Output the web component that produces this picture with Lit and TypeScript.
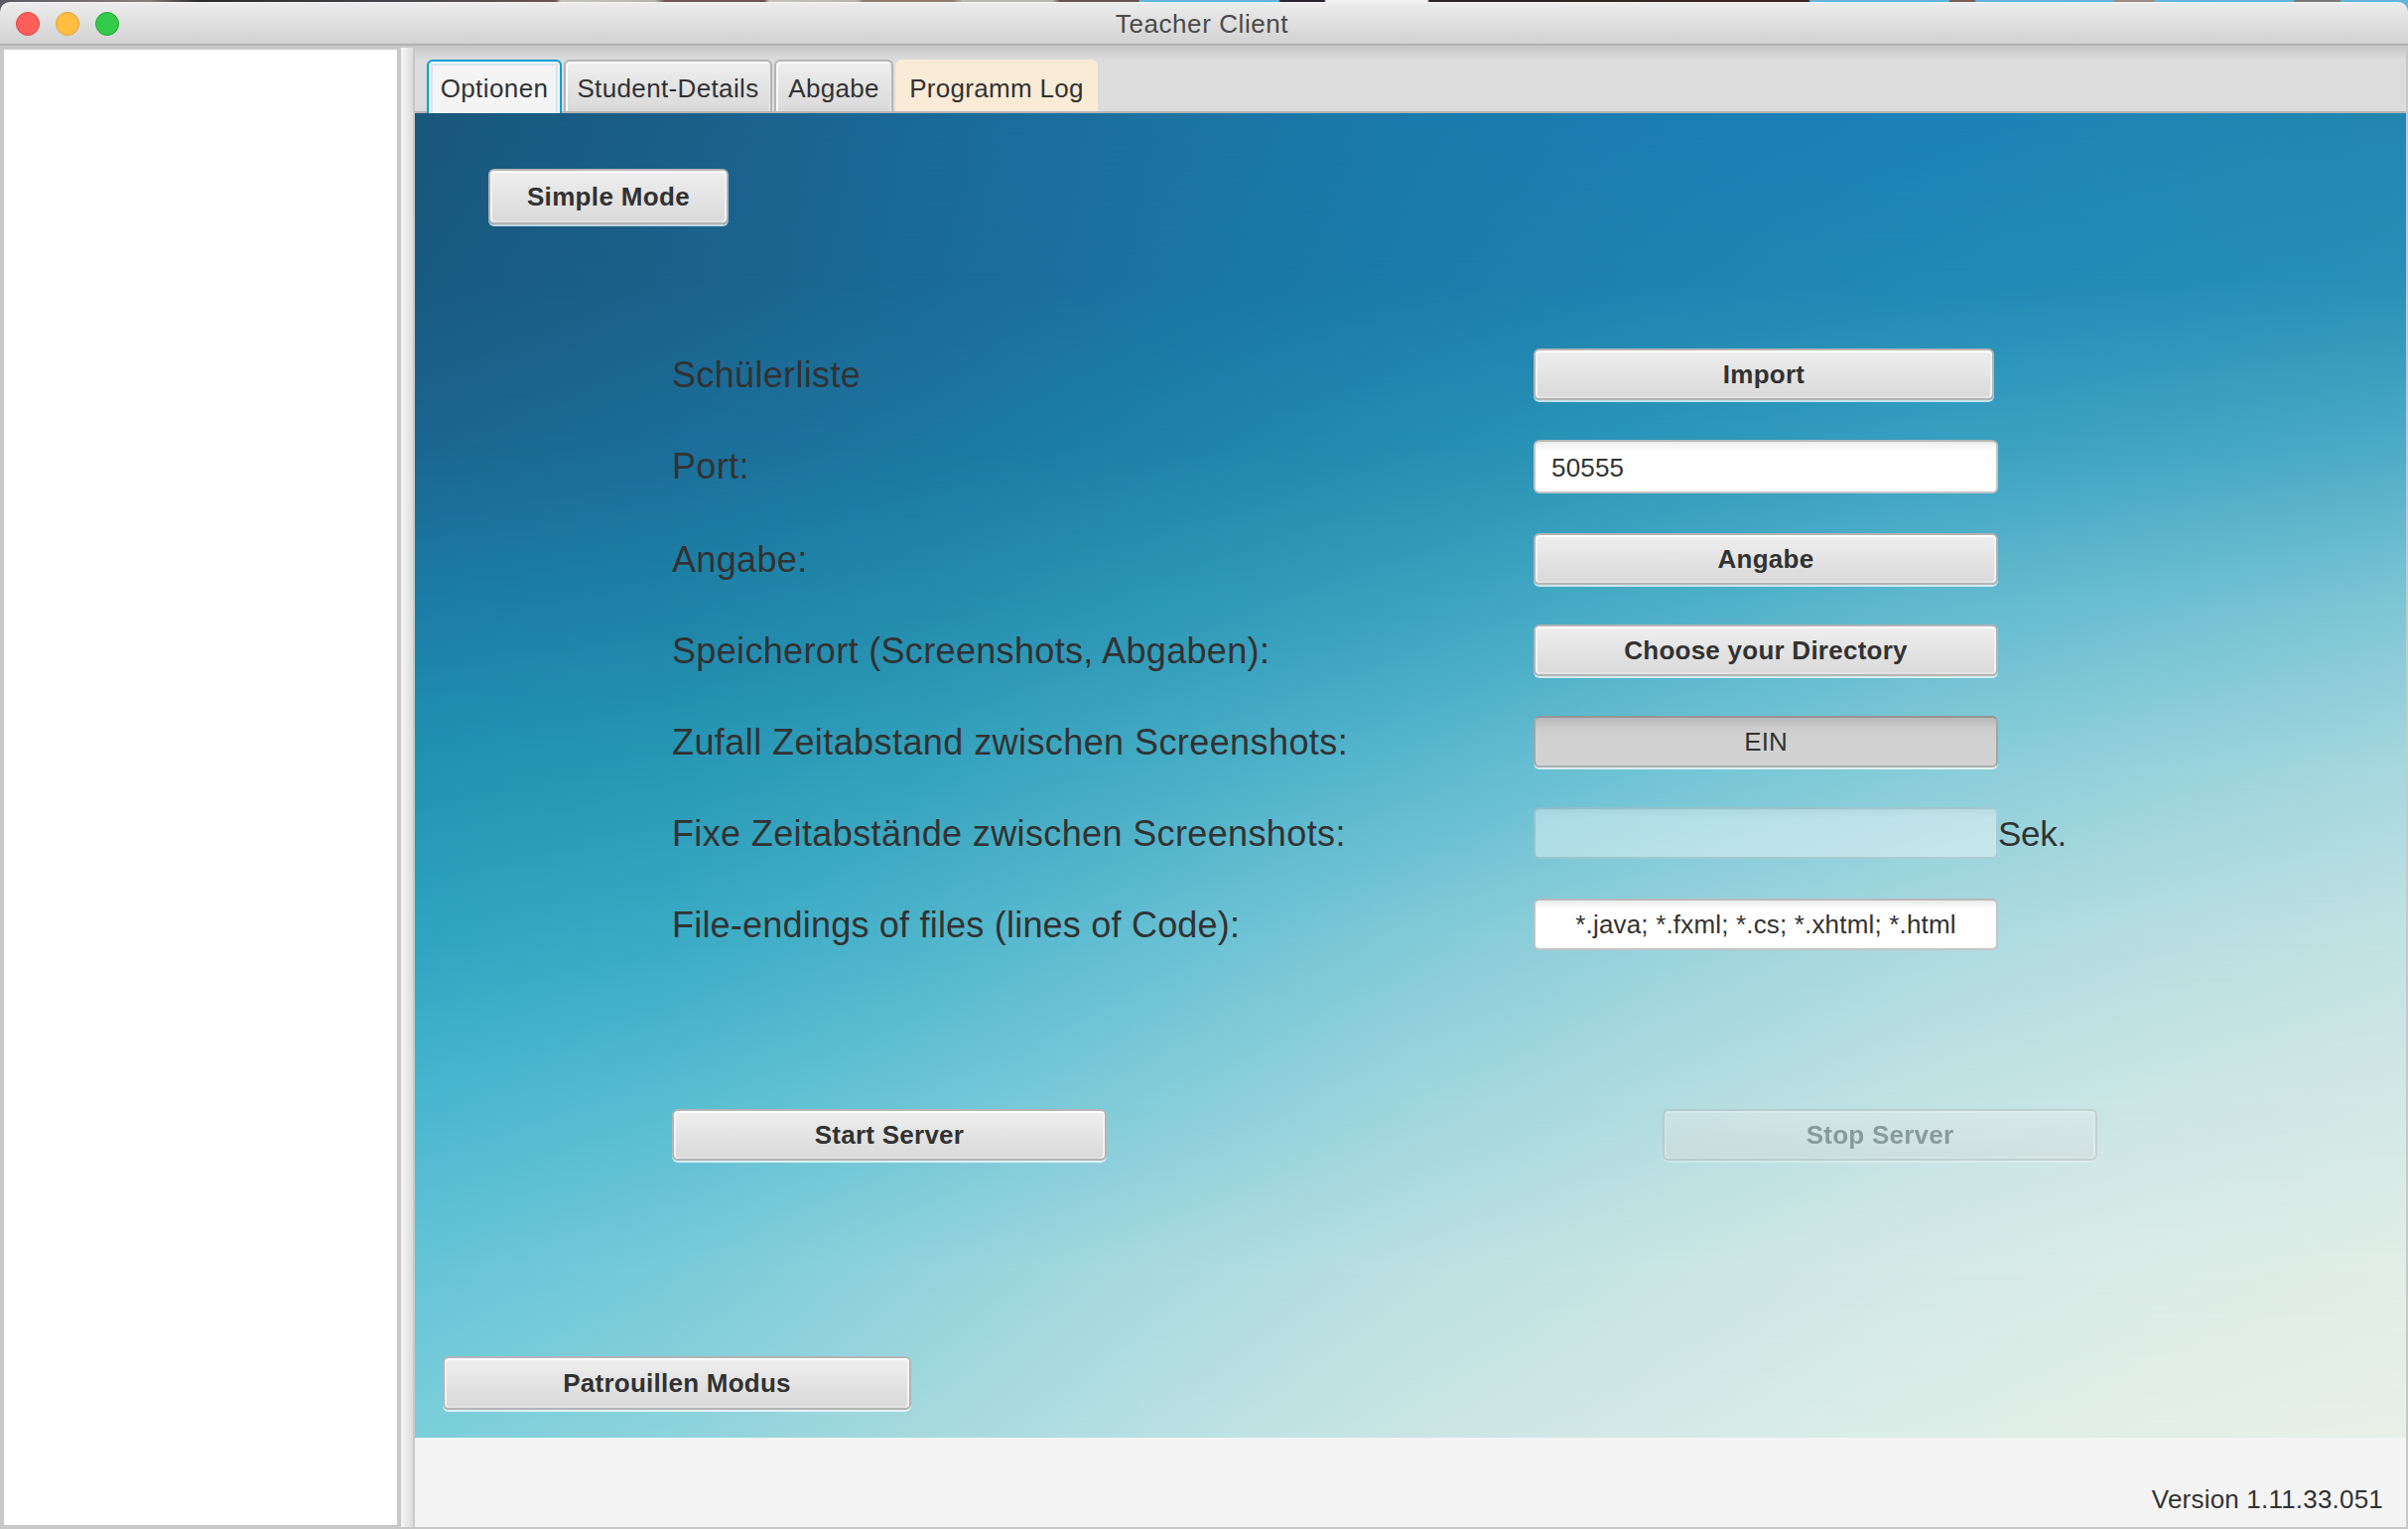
import { LitElement, html, css } from "lit";
import { customElement } from "lit/decorators.js";
import { styleMap } from "lit/directives/style-map.js";

/* Colour grid of the backdrop: one row per evenly spaced height. */
const MESH: string[][] = [
  ["#19577a", "#1a5f88", "#1b6998", "#1b73a2", "#1b7aad", "#1b7eb3", "#1c82b8", "#1f85b4", "#2286b0"],
  ["#1a5a80", "#1a618b", "#1b6a97", "#1b74a2", "#1b7cab", "#1e83b2", "#2088b6", "#238cb7", "#2890b6"],
  ["#1b6691", "#1b6d98", "#1c779f", "#1e82a8", "#248db1", "#2c97ba", "#379fc0", "#41a5c3", "#4dabc6"],
  ["#1c7ea6", "#1e83a8", "#238cae", "#2d98b7", "#3ba3bf", "#4cafc8", "#61b9cf", "#70c0d3", "#80c7d6"],
  ["#2194b3", "#2899b7", "#35a3bd", "#47aec6", "#5cb9cf", "#73c4d6", "#88cdd9", "#99d3dc", "#a8d8df"],
  ["#2fa5c2", "#3aabc5", "#4eb5cc", "#67c0d3", "#82cad8", "#99d3dd", "#abdadf", "#b8dee1", "#c3e2e3"],
  ["#4ab7cf", "#58bdd2", "#6dc5d7", "#86cdda", "#9fd6de", "#b2dce0", "#c2e2e3", "#cce6e5", "#d4e8e5"],
  ["#66c4d8", "#78cad9", "#92d3dc", "#aadadf", "#bce0e2", "#c9e5e4", "#d4e9e6", "#dcece7", "#e1eee7"],
  ["#7acfda", "#8dd3dc", "#a5d9de", "#b9e0e2", "#cae5e4", "#d4e9e6", "#ddede7", "#e3efe8", "#e7f0e8"],
];

@customElement("app-root")
export class AppRoot extends LitElement {
  static styles = css`
    :host {
      display: block;
      width: 2426px;
      height: 1540px;
      overflow: hidden;
      font-family: "Liberation Sans", Arial, sans-serif;
      font-size: 26px;
      color: #323232;
      background: linear-gradient(90deg, #5a5a64 0, #8a7f7c 150px, #2c2a2a 200px, #45464c 400px, #6b5550 560px, #c6c3bd 565px, #b5b3ac 660px, #6c5552 670px, #6c5552 770px, #c6c3bd 775px, #b5b3ac 864px, #8d7b70 870px, #8d7b70 960px, #b9b8b0 970px, #b9b8b0 1060px, #6a5452 1068px, #6a5452 1147px, #62b5dc 1148px, #62b5dc 1288px, #2c2430 1290px, #2c2430 1334px, #f2f2f2 1336px, #f2f2f2 1438px, #2b2326 1440px, #3b2624 1822px, #62b5dc 1824px, #62b5dc 1963px, #7d5b52 1965px, #7d5b52 1989px, #62b5dc 1991px, #62b5dc 2129px, #9a8a84 2131px, #9a8a84 2169px, #62b5dc 2171px, #62b5dc 2310px, #7b7a78 2312px, #7b7a78 2357px, #62b5dc 2359px, #62b5dc 2426px);
    }
    * { box-sizing: border-box; }
    .window {
      display: flex;
      flex-direction: column;
      height: 1540px;
      padding-top: 2px;
    }
    .titlebar {
      display: grid;
      grid-template-columns: 1fr auto 1fr;
      align-items: center;
      height: 44px;
      padding: 0 16px;
      border-radius: 10px 10px 0 0;
      border-top: 1px solid #f6f6f6;
      border-bottom: 2px solid #b1b1b1;
      background: linear-gradient(#ececec, #d2d2d2);
      color: #4a4a4a;
    }
    .lights { display: flex; gap: 16px; }
    .light { width: 24px; height: 24px; border-radius: 50%; border: 1px solid; }
    .red { background: #ff5f5a; border-color: #e0443e; }
    .yellow { background: #ffbe3f; border-color: #dfa032; }
    .green { background: #33c949; border-color: #1fa833; }
    .title { letter-spacing: 0.58px; white-space: nowrap; padding: 1px 4px 0 0; }
    .body {
      display: grid;
      grid-template-columns: 404px 12px 1fr;
      height: 1494px;
      background: #c8c8c8;
      padding: 2px 2px 2px 0;
    }
    .list { margin: 2px 4px 2px 4px; background: #fff; }
    .divider { background: linear-gradient(90deg, #f7f7f7, #ececec 40%, #dcdcdc); }
    .main { display: flex; flex-direction: column; padding-left: 2px; }
    .tabs {
      display: flex;
      height: 66px;
      padding: 12px 0 0 12px;
      gap: 2px;
      background: linear-gradient(#b5b5b5, #b5b5b5) 0 64px / 100% 2px no-repeat,
        linear-gradient(#c9c9c9 0, #dcdcdc 12px);
    }
    .tab {
      height: 52px;
      border: 2px solid #b4b4b4;
      border-bottom: 0;
      border-radius: 6px 6px 0 0;
      background: linear-gradient(#efefef, #d9d9d9);
      box-shadow: inset 2px 2px 0 #fafafa, inset -1px 0 0 #ececec;
      display: flex;
      align-items: center;
      justify-content: center;
      white-space: nowrap;
      padding-top: 4px;
    }
    .t1 {
      width: 136px;
      height: 54px;
      border-color: #039ed3;
      background: #f4f4f4;
      box-shadow: inset 0 2px 0 #f4f4f4, inset 2px 0 0 #f4f4f4, inset -2px 0 0 #f4f4f4,
        inset 0 4px 0 #d3e8ef, inset 4px 0 0 #d3e8ef, inset -4px 0 0 #d3e8ef;
      padding-top: 2px;
      letter-spacing: 0.4px;
    }
    .t2 { width: 210px; letter-spacing: 0.36px; }
    .t3 { width: 120px; letter-spacing: 0.3px; }
    .t4 { width: 204px; border: 0; background: #faebd7; box-shadow: none; padding-top: 6px; letter-spacing: 0.3px; }
    .content { display: grid; height: 1334px; flex: none; }
    .mesh { display: grid; grid-area: 1 / 1; }
    .row-colour { grid-area: 1 / 1; }
    .pane { grid-area: 1 / 1; display: flex; flex-direction: column; align-items: flex-start; z-index: 1; }
    .btn {
      display: flex;
      align-items: center;
      justify-content: center;
      height: 52px;
      border: 2px solid #b4b4b4;
      border-radius: 6px;
      background: linear-gradient(#efefef, #d9d9d9);
      box-shadow: inset 0 2px 0 #fff, inset 2px 0 0 #f3f3f3, inset -2px 0 0 #f3f3f3,
        inset 0 -2px 0 #e3e3e3, 0 2px 0 rgba(255, 255, 255, 0.73);
      font-weight: bold;
      letter-spacing: 0.25px;
      white-space: nowrap;
    }
    .simple { width: 242px; height: 56px; margin: 56px 0 0 74px; letter-spacing: 0.35px; }
    .form {
      display: grid;
      grid-template-columns: 868px 468px auto;
      grid-template-rows: 92px 94px 92px 92px 92px 92px 54px;
      margin: 125px 0 0 259px;
    }
    .label { font-size: 36px; line-height: 54px; white-space: nowrap; height: 54px; letter-spacing: 0.34px; }
    .zufall { letter-spacing: 0.42px; }
    .fixe { letter-spacing: 0.37px; }
    .endings { letter-spacing: 0.21px; }
    .unit { font-size: 35px; letter-spacing: -0.3px; }
    .import { width: 464px; }
    .field {
      display: flex;
      align-items: center;
      height: 54px;
      border: 2px solid #c4c4c4;
      border-top-color: #b8b8b8;
      border-radius: 6px;
      background: linear-gradient(#ebebeb 0, #fff 9px);
      padding: 2px 16px 0;
      letter-spacing: 0.17px;
      white-space: nowrap;
    }
    .toggle {
      font-weight: normal;
      letter-spacing: 0;
      border-color: #949494 #a4a4a4 #b0b0b0;
      background: linear-gradient(#b9b9b9 0, #cccccc 10px, #d2d2d2 22px);
      box-shadow: 0 2px 0 rgba(255, 255, 255, 0.73);
    }
    .off { height: 52px; opacity: 0.42; }
    .ends { height: 52px; justify-content: center; padding: 0; }
    .actions { display: flex; gap: 560px; margin: 158px 0 0 259px; }
    .server { width: 438px; }
    .stop { opacity: 0.4; }
    .patrol { width: 472px; height: 54px; margin: 197px 0 0 28px; }
    .footer {
      flex: 1;
      background: #f4f4f4;
      display: flex;
      justify-content: flex-end;
      align-items: flex-end;
      padding: 0 23px 12px 0;
    }
    .version { letter-spacing: 0.2px; }
  `;

  private meshRow(colours: string[], i: number) {
    const step = 100 / (MESH.length - 1);
    const mask =
      i === 0
        ? "none"
        : `linear-gradient(to bottom, transparent ${(i - 1) * step}%, #000 ${i * step}%)`;
    return html`<div
      class="row-colour"
      style=${styleMap({ background: `linear-gradient(90deg, ${colours.join(", ")})`, maskImage: mask })}
    ></div>`;
  }

  render() {
    return html`
      <div class="window">
        <div class="titlebar">
          <div class="lights">
            <span class="light red"></span><span class="light yellow"></span><span class="light green"></span>
          </div>
          <div class="title">Teacher Client</div>
        </div>
        <div class="body">
          <div class="list"></div>
          <div class="divider"></div>
          <div class="main">
            <div class="tabs">
              <div class="tab t1">Optionen</div>
              <div class="tab t2">Student-Details</div>
              <div class="tab t3">Abgabe</div>
              <div class="tab t4">Programm Log</div>
            </div>
            <div class="content">
              <div class="mesh">${MESH.map((c, i) => this.meshRow(c, i))}</div>
              <div class="pane">
                <div class="btn simple">Simple Mode</div>
                <div class="form">
                  <div class="label">Schülerliste</div>
                  <div class="btn import">Import</div>
                  <div></div>
                  <div class="label">Port:</div>
                  <div class="field">50555</div>
                  <div></div>
                  <div class="label">Angabe:</div>
                  <div class="btn">Angabe</div>
                  <div></div>
                  <div class="label">Speicherort (Screenshots, Abgaben):</div>
                  <div class="btn">Choose your Directory</div>
                  <div></div>
                  <div class="label zufall">Zufall Zeitabstand zwischen Screenshots:</div>
                  <div class="btn toggle">EIN</div>
                  <div></div>
                  <div class="label fixe">Fixe Zeitabstände zwischen Screenshots:</div>
                  <div class="field off"></div>
                  <div class="label unit">Sek.</div>
                  <div class="label endings">File-endings of files (lines of Code):</div>
                  <div class="field ends">*.java; *.fxml; *.cs; *.xhtml; *.html</div>
                  <div></div>
                </div>
                <div class="actions">
                  <div class="btn server">Start Server</div>
                  <div class="btn server stop">Stop Server</div>
                </div>
                <div class="btn patrol">Patrouillen Modus</div>
              </div>
            </div>
            <div class="footer"><span class="version">Version 1.11.33.051</span></div>
          </div>
        </div>
      </div>
    `;
  }
}
